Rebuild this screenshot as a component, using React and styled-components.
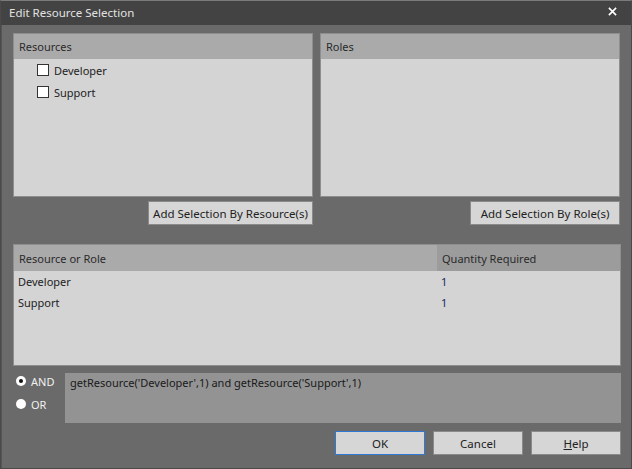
import styled, { createGlobalStyle } from "styled-components";

const Global = createGlobalStyle`
  html, body {
    margin: 0;
    padding: 0;
    background: #6a6a6a;
  }
  * {
    box-sizing: border-box;
  }
`;

const resources = ["Developer", "Support"];
const selection = [
  { name: "Developer", qty: 1 },
  { name: "Support", qty: 1 },
];

const App = () => {
  return (
    <>
      <Global />
      <Window>
        <TitleBar>
          <span>Edit Resource Selection</span>
          <CloseIcon viewBox="0 0 10 10">
            <path d="M1 1 L9 9 M9 1 L1 9" stroke="#fff" strokeWidth="1.8" />
          </CloseIcon>
        </TitleBar>
        <Body>
          <TopRow>
            <Column>
              <Panel>
                <PanelHeader>Resources</PanelHeader>
                <CheckList>
                  {resources.map((r) => (
                    <CheckItem key={r}>
                      <Box />
                      {r}
                    </CheckItem>
                  ))}
                </CheckList>
              </Panel>
              <ButtonRow>
                <Button $width={165}>Add Selection By Resource(s)</Button>
              </ButtonRow>
            </Column>
            <Column>
              <Panel>
                <PanelHeader>Roles</PanelHeader>
              </Panel>
              <ButtonRow>
                <Button $width={150}>Add Selection By Role(s)</Button>
              </ButtonRow>
            </Column>
          </TopRow>

          <Table>
            <HeaderRow>
              <HeadCell>Resource or Role</HeadCell>
              <HeadCell $dark>Quantity Required</HeadCell>
            </HeaderRow>
            {selection.map((s) => (
              <Row key={s.name}>
                <Cell>{s.name}</Cell>
                <Cell $num>{s.qty}</Cell>
              </Row>
            ))}
          </Table>

          <ExprRow>
            <Radios>
              <RadioLabel>
                <Radio $checked />
                AND
              </RadioLabel>
              <RadioLabel>
                <Radio />
                OR
              </RadioLabel>
            </Radios>
            <Expression>
              getResource('Developer',1) and getResource('Support',1)
            </Expression>
          </ExprRow>

          <Footer>
            <Button $width={90} $primary>
              OK
            </Button>
            <Button $width={90}>Cancel</Button>
            <Button $width={90}>
              <u>H</u>elp
            </Button>
          </Footer>
        </Body>
      </Window>
    </>
  );
};

export default App;

const Window = styled.div`
  width: 632px;
  height: 469px;
  background: #6a6a6a;
  border: 1px solid #4a4a4a;
  border-top-color: #7a7a7a;
  display: flex;
  flex-direction: column;
  font-family: "Noto Sans", "Open Sans", sans-serif;
  font-size: 11px;
  color: #222;
  overflow: hidden;
`;

const TitleBar = styled.div`
  height: 24px;
  flex: none;
  background: #434343;
  color: #e2e2e2;
  display: flex;
  align-items: center;
  justify-content: space-between;
  padding: 0 14px 2px 8px;
  font-size: 11.5px;
`;

const CloseIcon = styled.svg`
  width: 9px;
  height: 9px;
  margin-top: -2px;
`;

const Body = styled.div`
  flex: 1;
  display: flex;
  flex-direction: column;
  padding: 8px 10px 0 11px;
  border-left: 1px solid #555;
`;

const TopRow = styled.div`
  display: grid;
  grid-template-columns: 300px 300px;
  gap: 7px;
`;

const Column = styled.div`
  display: flex;
  flex-direction: column;
`;

const Panel = styled.div`
  height: 164px;
  background: #d4d4d4;
  border: 1px solid #8e8e8e;
`;

const PanelHeader = styled.div`
  height: 25px;
  background: #aaaaaa;
  padding: 0 5px;
  display: flex;
  align-items: center;
  color: #2a2a2a;
`;

const CheckList = styled.div`
  display: flex;
  flex-direction: column;
  padding: 2px 0 0 23px;
  gap: 4px;
`;

const CheckItem = styled.div`
  display: flex;
  align-items: center;
  gap: 5px;
  height: 18px;
  color: #222;
`;

const Box = styled.span`
  width: 12px;
  height: 12px;
  background: #fff;
  border: 1px solid #333;
`;

const ButtonRow = styled.div`
  display: flex;
  justify-content: flex-end;
  margin-top: 4px;
`;

const Button = styled.button`
  width: ${(p) => p.$width}px;
  height: 24px;
  background: #d6d6d6;
  border: 1px solid ${(p) => (p.$primary ? "#2f78d4" : "#8a8a8a")};
  font-family: inherit;
  font-size: 11.5px;
  color: #222;
  padding: 0;
  display: flex;
  align-items: center;
  justify-content: center;
  u {
    text-decoration: underline;
  }
`;

const Table = styled.div`
  margin-top: 19px;
  height: 122px;
  background: #d4d4d4;
  border: 1px solid #8e8e8e;
`;

const HeaderRow = styled.div`
  display: grid;
  grid-template-columns: 423px 1fr;
  height: 26px;
  background: #aaaaaa;
`;

const HeadCell = styled.div`
  display: flex;
  align-items: center;
  padding: 0 5px;
  background: ${(p) => (p.$dark ? "#9c9c9c" : "transparent")};
  color: #2a2a2a;
`;

const Row = styled.div`
  display: grid;
  grid-template-columns: 423px 1fr;
  height: 21px;
  align-items: center;
`;

const Cell = styled.div`
  padding: 0 4px;
  color: ${(p) => (p.$num ? "#1b2a5c" : "#222")};
`;

const ExprRow = styled.div`
  display: flex;
  margin-top: 7px;
  gap: 0;
`;

const Radios = styled.div`
  width: 52px;
  display: flex;
  flex-direction: column;
  gap: 7px;
  padding: 0 0 0 3px;
`;

const RadioLabel = styled.div`
  display: flex;
  align-items: center;
  gap: 5px;
  height: 16px;
  color: #f0f0f0;
`;

const Radio = styled.span`
  width: 10px;
  height: 10px;
  border-radius: 50%;
  background: #fff;
  position: relative;
  &::after {
    content: "";
    display: ${(p) => (p.$checked ? "block" : "none")};
    position: absolute;
    left: 3px;
    top: 3px;
    width: 4px;
    height: 4px;
    border-radius: 50%;
    background: #111;
  }
`;

const Expression = styled.div`
  width: 556px;
  height: 50px;
  background: #939393;
  padding: 2px 5px;
  color: #1a1a1a;
`;

const Footer = styled.div`
  display: flex;
  justify-content: flex-end;
  gap: 8px;
  margin-top: 8px;
`;
